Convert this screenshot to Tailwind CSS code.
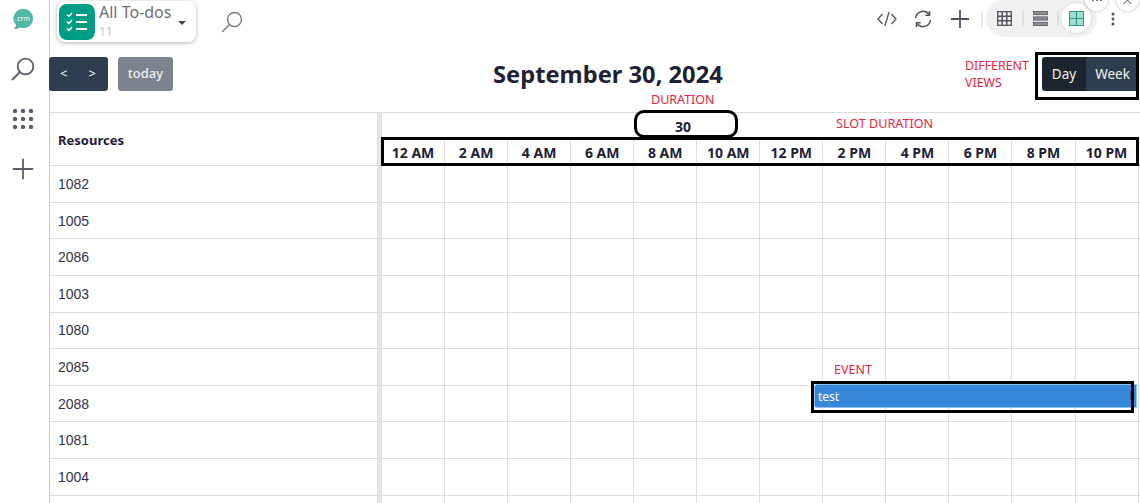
<!DOCTYPE html>
<html lang="en">
<head>
  <meta charset="UTF-8">
  <title>All To-dos</title>
  <script src="https://cdn.jsdelivr.net/npm/@tailwindcss/browser@4"></script>
</head>
<body class="w-[1140px] h-[503px] overflow-hidden bg-white flex font-['Noto_Sans',sans-serif] text-[#212134]">

  <!-- Sidebar -->
  <aside class="w-[50px] h-full shrink-0 border-r border-[#cfcfcf] flex flex-col items-center pr-[3px]">
    <svg class="mt-[8px] w-[22px] h-[22px]" viewBox="0 0 22 22">
      <path d="M11.5 1a9.5 9.5 0 1 1-3 18.5C6.500 20.800 4 21 1.500 21c1.500-1 2.500-2.500 2.600-4A9.500 9.500 0 0 1 11.500 1z" fill="#4fb8a8"/>
      <text x="11.500" y="12.500" text-anchor="middle" font-size="7" fill="#fff" font-family="Noto Sans">crm</text>
    </svg>
    <svg class="mt-[27px] w-[24px] h-[24px]" viewBox="0 0 24 24" fill="none" stroke="#5f5b6b" stroke-width="1.800">
      <circle cx="14.500" cy="9.500" r="7.800"/><path d="M9 15 1.500 22.500" stroke-linecap="round"/>
    </svg>
    <svg class="mt-[27px] w-[22px] h-[22px]" viewBox="0 0 22 22" fill="#5f5b6b">
      <circle cx="3" cy="3" r="2.200"/><circle cx="11" cy="3" r="2.200"/><circle cx="19" cy="3" r="2.200"/>
      <circle cx="3" cy="11" r="2.200"/><circle cx="11" cy="11" r="2.200"/><circle cx="19" cy="11" r="2.200"/>
      <circle cx="3" cy="19" r="2.200"/><circle cx="11" cy="19" r="2.200"/><circle cx="19" cy="19" r="2.200"/>
    </svg>
    <svg class="mt-[28px] w-[22px] h-[22px]" viewBox="0 0 22 22" stroke="#5f5b6b" stroke-width="1.800" stroke-linecap="round">
      <path d="M11 1.500v19M1.500 11h19"/>
    </svg>
  </aside>

  <main class="relative flex-1 min-w-0">
    <!-- Top bar -->
    <div class="h-[44px] flex items-start">
      <div class="ml-[7px] mt-[1px] w-[139px] h-[41px] rounded-lg bg-white shadow-[0_1px_4px_rgba(0,0,0,0.3)] flex items-center pl-[2px]">
        <div class="w-[36px] h-[36px] rounded-lg bg-[#009d85] flex items-center justify-center shrink-0">
          <svg class="w-[24px] h-[24px]" viewBox="0 0 24 24" fill="none" stroke="#fff" stroke-width="2">
            <path d="M11 5h11M11 12h11M11 19h11" stroke-width="1.800"/>
            <path d="M2 4.500l2 2 3-3.500M2 11.500l2 2 3-3.500M2 18.500l2 2 3-3.500" stroke-width="1.500"/>
          </svg>
        </div>
        <div class="ml-[4px] flex flex-col leading-none">
          <span class="text-[16px] leading-[20px] text-[#6f6f78] mt-[-2px]">All To-dos</span>
          <span class="text-[12px] leading-[16px] text-[#c8c8c8] mt-[2px]">11</span>
        </div>
        <span class="ml-[7px] w-0 h-0 border-x-[4px] border-x-transparent border-t-[4px] border-t-[#444] mt-[2px]"></span>
      </div>
      <svg class="ml-[25px] mt-[11px] w-[22px] h-[22px]" viewBox="0 0 22 22" fill="none" stroke="#77757f" stroke-width="1.400">
        <circle cx="13.500" cy="8.500" r="7"/><path d="M8.500 13.500 1.500 20.500" stroke-linecap="round"/>
      </svg>

      <div class="ml-auto flex items-center h-[37px]">
        <svg class="w-[20px] h-[16px]" viewBox="0 0 20 16" fill="none" stroke="#55525f" stroke-width="1.300">
          <path d="M5.500 3 1 8l4.500 5M14.500 3 19 8l-4.500 5M12 1 8 15"/>
        </svg>
        <svg class="ml-[17px] w-[18px] h-[18px]" viewBox="0 0 18 18" fill="none" stroke="#55525f" stroke-width="1.500">
          <path d="M1.500 8A7.500 7.500 0 0 1 15 4.500M16.500 10A7.500 7.500 0 0 1 3 13.500"/>
          <path d="M15.500 1v4.200h-4.200M2.500 17v-4.200h4.200"/>
        </svg>
        <svg class="ml-[19px] w-[18px] h-[18px]" viewBox="0 0 18 18" stroke="#55525f" stroke-width="1.800">
          <path d="M9 0v18M0 9h18"/>
        </svg>
        <div class="ml-[12px] w-[2px] h-[16px] bg-[#e8e8e8]"></div>
        <div class="-mt-[1px] ml-[3px] w-[111px] h-[38px] rounded-full bg-[#f1f1f1] flex items-center pl-[11px]">
          <svg class="w-[15px] h-[15px]" viewBox="0 0 15 15" fill="none" stroke="#55525f" stroke-width="1.300">
            <rect x="0.700" y="0.700" width="13.600" height="13.600"/><path d="M5.200 1v13M9.800 1v13M1 5.200h13M1 9.800h13" stroke-width="1.500"/>
          </svg>
          <div class="ml-[10px] w-[2px] h-[16px] bg-[#e0e0e0]"></div>
          <svg class="ml-[9px] w-[15px] h-[15px]" viewBox="0 0 15 15" fill="#8f8d96" stroke="#55525f" stroke-width="0.800">
            <rect x="0.500" y="0.500" width="14" height="3.200"/><rect x="0.500" y="5.900" width="14" height="3.200"/><rect x="0.500" y="11.300" width="14" height="3.200"/>
          </svg>
          <div class="ml-[9px] w-[2px] h-[16px] bg-[#e0e0e0]"></div>
          <div class="ml-[2px] w-[30px] h-[30px] rounded-full bg-white shadow-[0_0_3px_rgba(0,0,0,0.15)] flex items-center justify-center">
            <svg class="w-[15px] h-[15px]" viewBox="0 0 15 15">
              <rect x="0.500" y="0.500" width="14" height="14" fill="#a5dcd2" stroke="#2a9d8a"/><path d="M7.500 1v13M1 7.500h13" stroke="#2a9d8a" stroke-width="1.200"/>
            </svg>
          </div>
        </div>
        <svg class="ml-[14px] mr-[25px] w-[4px] h-[14px]" viewBox="0 0 4 14" fill="#55525f">
          <circle cx="2" cy="2" r="1.500"/><circle cx="2" cy="7" r="1.500"/><circle cx="2" cy="12" r="1.500"/>
        </svg>
      </div>
    </div>

    <!-- Calendar toolbar -->
    <div class="relative h-[68px] pt-[13px] flex items-start justify-between">
      <div class="flex">
        <div class="-ml-[1px] w-[59px] h-[34px] rounded-[3px] bg-[#2c3e50] text-white text-[13px] flex items-center justify-between pl-[11px] pr-[12px]">
          <span>&lt;</span><span>&gt;</span>
        </div>
        <div class="ml-[10px] w-[55px] h-[34px] rounded-[3px] bg-[#7b838e] text-[#eef0f2] text-[13px] font-medium flex items-center justify-center">today</div>
      </div>
      <h1 class="absolute left-[443px] top-[14px] text-[23.700px] leading-[33px] font-bold whitespace-nowrap text-[#212134]">September 30, 2024</h1>
      <div class="mr-[1px] h-[34px] flex text-[13.500px] text-[#f2f2f2] rounded-[3px] overflow-hidden">
        <div class="w-[44px] pt-[1px] bg-[#1a252f] flex items-center justify-center">Day</div>
        <div class="w-[53px] pt-[1px] bg-[#2c3e50] flex items-center justify-center">Week</div>
      </div>
    </div>

    <!-- Timeline -->
    <div class="border-t border-[#ddd]">
      <div class="flex h-[53.300px] border-b border-[#ddd]">
        <div class="w-[327px] flex items-center pl-[8px] pt-[3px] text-[13px] font-bold">Resources</div>
        <div class="w-[5px] bg-[#e8e8e8] border-x border-[#ddd]"></div>
        <div class="flex-1 flex flex-col">
          <div class="h-[26px] w-[602px] flex items-center justify-center text-[14px] font-bold">30</div>
          <div id="slots" class="h-[26px] flex text-[14px] font-bold"></div>
        </div>
      </div>
      <div id="rows"></div>
    </div>

    <!-- Event -->
    <div class="absolute left-[764px] top-[384px] w-[323px] h-[24px] bg-[#3788d8] border border-[#8cc0f0] rounded-l-[3px] text-white text-[12px] leading-[24px] pl-[3px]">test</div>
    <div class="absolute left-[1080px] top-[391px] w-[3px] h-[9px] bg-[#2f5f8f]"></div>

    <!-- Annotations -->
    <div class="absolute left-[331px] top-[137px] w-[758px] h-[29px] border-[3px] border-black"></div>
    <div class="absolute left-[584px] top-[110px] w-[104px] h-[28px] border-[3px] border-black rounded-[10px]"></div>
    <div class="absolute left-[761px] top-[381px] w-[323px] h-[32px] border-[3px] border-black"></div>
    <div class="absolute left-[985px] top-[52px] w-[104px] h-[48px] border-[3px] border-black"></div>
    <div class="absolute left-[601px] top-[92px] text-[12.500px] leading-[16px] text-[#e8243c]">DURATION</div>
    <div class="absolute left-[786px] top-[116px] text-[12.600px] leading-[16px] text-[#e8243c]">SLOT DURATION</div>
    <div class="absolute left-[784px] top-[362px] text-[12.500px] leading-[16px] text-[#e8243c]">EVENT</div>
    <div class="absolute left-[915px] top-[57px] text-[12.400px] leading-[17px] text-[#e8243c]">DIFFERENT<br>VIEWS</div>

    <!-- Floating window controls -->
    <div class="absolute left-[1035px] -top-[12px] w-[23px] h-[23px] rounded-full bg-white shadow-[0_0_3px_rgba(0,0,0,0.3)] flex items-center justify-center pt-[1px]">
      <svg class="w-[10px] h-[2px]" viewBox="0 0 10 2" fill="#444"><circle cx="1" cy="1" r="1"/><circle cx="5" cy="1" r="1"/><circle cx="9" cy="1" r="1"/></svg>
    </div>
    <div class="absolute left-[1066px] -top-[12px] w-[23px] h-[23px] rounded-full bg-white shadow-[0_0_3px_rgba(0,0,0,0.3)] flex items-center justify-center pt-[5px]">
      <svg class="w-[9px] h-[6px]" viewBox="0 0 9 6" fill="none" stroke="#444"><path d="M0.500 5 4.500 1l4 4"/></svg>
    </div>
  </main>

  <script>
    const slots = ['12 AM', '2 AM', '4 AM', '6 AM', '8 AM', '10 AM', '12 PM', '2 PM', '4 PM', '6 PM', '8 PM', '10 PM'];
    const ids = ['1082', '1005', '2086', '1003', '1080', '2085', '2088', '1081', '1004', ''];

    document.getElementById('slots').innerHTML = slots.map(s =>
      `<div class="w-[63.050px] shrink-0 border-r border-[#ddd] flex items-center justify-center whitespace-nowrap">${s}</div>`
    ).join('');

    const cells = slots.map(() => '<div class="w-[63.050px] shrink-0 border-r border-[#ddd]"></div>').join('');
    document.getElementById('rows').innerHTML = ids.map(id => `
      <div class="flex h-[36.600px] border-b border-[#ddd]">
        <div class="w-[327px] flex items-center pl-[8px] pt-[1px] text-[14px] text-[#33314a] font-['Liberation_Sans',sans-serif]">${id}</div>
        <div class="w-[5px] bg-[#e8e8e8] border-x border-[#ddd]"></div>
        <div class="flex-1 flex">${cells}</div>
      </div>`).join('');
  </script>
</body>
</html>
